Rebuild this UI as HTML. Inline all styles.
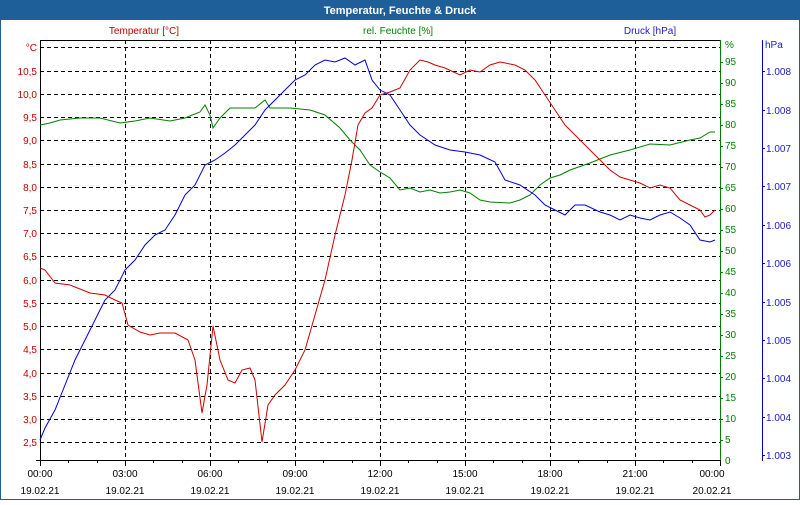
<!DOCTYPE html>
<html><head><meta charset="utf-8"><style>
html,body{margin:0;padding:0;background:#fff}
body{width:800px;height:500px;overflow:hidden;font-family:"Liberation Sans",sans-serif}
</style></head><body>
<svg width="800" height="500" xmlns="http://www.w3.org/2000/svg" font-family="Liberation Sans, sans-serif" font-size="10">
<rect x="0" y="0" width="800" height="500" fill="#fff"/>
<rect x="0.5" y="0.5" width="799" height="499" fill="none" stroke="#1f5f99"/>
<rect x="0" y="0" width="800" height="20" fill="#1f5f99"/>
<text x="400" y="14" fill="#fff" font-weight="bold" font-size="11" text-anchor="middle">Temperatur, Feuchte &amp; Druck</text>
<text x="144" y="34" fill="#c00000" text-anchor="middle">Temperatur [°C]</text>
<text x="398" y="34" fill="#008000" text-anchor="middle">rel. Feuchte [%]</text>
<text x="650" y="34" fill="#2020c0" text-anchor="middle">Druck [hPa]</text>
<g stroke="#000" stroke-dasharray="4,3" stroke-width="1">
<line x1="40" y1="47.5" x2="720" y2="47.5"/><line x1="40" y1="71.5" x2="720" y2="71.5"/><line x1="40" y1="94.5" x2="720" y2="94.5"/><line x1="40" y1="117.5" x2="720" y2="117.5"/><line x1="40" y1="140.5" x2="720" y2="140.5"/><line x1="40" y1="164.5" x2="720" y2="164.5"/><line x1="40" y1="187.5" x2="720" y2="187.5"/><line x1="40" y1="210.5" x2="720" y2="210.5"/><line x1="40" y1="233.5" x2="720" y2="233.5"/><line x1="40" y1="256.5" x2="720" y2="256.5"/><line x1="40" y1="280.5" x2="720" y2="280.5"/><line x1="40" y1="303.5" x2="720" y2="303.5"/><line x1="40" y1="326.5" x2="720" y2="326.5"/><line x1="40" y1="349.5" x2="720" y2="349.5"/><line x1="40" y1="373.5" x2="720" y2="373.5"/><line x1="40" y1="396.5" x2="720" y2="396.5"/><line x1="40" y1="419.5" x2="720" y2="419.5"/><line x1="40" y1="442.5" x2="720" y2="442.5"/>
<line x1="125.5" y1="40" x2="125.5" y2="460"/><line x1="210.5" y1="40" x2="210.5" y2="460"/><line x1="295.5" y1="40" x2="295.5" y2="460"/><line x1="380.5" y1="40" x2="380.5" y2="460"/><line x1="465.5" y1="40" x2="465.5" y2="460"/><line x1="550.5" y1="40" x2="550.5" y2="460"/><line x1="635.5" y1="40" x2="635.5" y2="460"/>
</g>
<line x1="40.5" y1="40" x2="40.5" y2="466" stroke="#000"/>
<line x1="40" y1="40.5" x2="720" y2="40.5" stroke="#000"/>
<line x1="36" y1="460.5" x2="720" y2="460.5" stroke="#000"/>
<line x1="720.5" y1="40" x2="720.5" y2="461" stroke="#008000"/>
<line x1="762.5" y1="40" x2="762.5" y2="461" stroke="#0000c0"/>
<g stroke="#000">
<line x1="40.5" y1="460" x2="40.5" y2="466"/><line x1="68.5" y1="460" x2="68.5" y2="463"/><line x1="97.5" y1="460" x2="97.5" y2="463"/><line x1="125.5" y1="460" x2="125.5" y2="466"/><line x1="153.5" y1="460" x2="153.5" y2="463"/><line x1="182.5" y1="460" x2="182.5" y2="463"/><line x1="210.5" y1="460" x2="210.5" y2="466"/><line x1="238.5" y1="460" x2="238.5" y2="463"/><line x1="267.5" y1="460" x2="267.5" y2="463"/><line x1="295.5" y1="460" x2="295.5" y2="466"/><line x1="323.5" y1="460" x2="323.5" y2="463"/><line x1="352.5" y1="460" x2="352.5" y2="463"/><line x1="380.5" y1="460" x2="380.5" y2="466"/><line x1="408.5" y1="460" x2="408.5" y2="463"/><line x1="437.5" y1="460" x2="437.5" y2="463"/><line x1="465.5" y1="460" x2="465.5" y2="466"/><line x1="493.5" y1="460" x2="493.5" y2="463"/><line x1="522.5" y1="460" x2="522.5" y2="463"/><line x1="550.5" y1="460" x2="550.5" y2="466"/><line x1="578.5" y1="460" x2="578.5" y2="463"/><line x1="607.5" y1="460" x2="607.5" y2="463"/><line x1="635.5" y1="460" x2="635.5" y2="466"/><line x1="663.5" y1="460" x2="663.5" y2="463"/><line x1="692.5" y1="460" x2="692.5" y2="463"/><line x1="720.5" y1="460" x2="720.5" y2="466"/>
</g>
<g fill="#000" text-anchor="middle">
<text x="40" y="477">00:00</text><text x="125" y="477">03:00</text><text x="210" y="477">06:00</text><text x="295" y="477">09:00</text><text x="380" y="477">12:00</text><text x="465" y="477">15:00</text><text x="550" y="477">18:00</text><text x="635" y="477">21:00</text><text x="712" y="477">00:00</text>
<text x="40" y="494">19.02.21</text><text x="125" y="494">19.02.21</text><text x="210" y="494">19.02.21</text><text x="295" y="494">19.02.21</text><text x="380" y="494">19.02.21</text><text x="465" y="494">19.02.21</text><text x="550" y="494">19.02.21</text><text x="635" y="494">19.02.21</text><text x="712" y="494">20.02.21</text>
</g>
<g fill="#c00000" text-anchor="end">
<text x="37" y="51">°C</text><text x="37" y="75">10,5</text><text x="37" y="98">10,0</text><text x="37" y="121">9,5</text><text x="37" y="144">9,0</text><text x="37" y="168">8,5</text><text x="37" y="191">8,0</text><text x="37" y="214">7,5</text><text x="37" y="237">7,0</text><text x="37" y="260">6,5</text><text x="37" y="284">6,0</text><text x="37" y="307">5,5</text><text x="37" y="330">5,0</text><text x="37" y="353">4,5</text><text x="37" y="377">4,0</text><text x="37" y="400">3,5</text><text x="37" y="423">3,0</text><text x="37" y="446">2,5</text>
</g>
<g fill="#008000">
<text x="725" y="48">%</text><text x="725" y="65">95</text><text x="725" y="86">90</text><text x="725" y="107">85</text><text x="725" y="128">80</text><text x="725" y="149">75</text><text x="725" y="170">70</text><text x="725" y="191">65</text><text x="725" y="212">60</text><text x="725" y="233">55</text><text x="725" y="254">50</text><text x="725" y="275">45</text><text x="725" y="296">40</text><text x="725" y="317">35</text><text x="725" y="338">30</text><text x="725" y="359">25</text><text x="725" y="380">20</text><text x="725" y="401">15</text><text x="725" y="422">10</text><text x="725" y="443">5</text><text x="725" y="464">0</text>
</g>
<g stroke="#008000">
<line x1="720" y1="62.5" x2="723" y2="62.5"/><line x1="720" y1="83.5" x2="723" y2="83.5"/><line x1="720" y1="104.5" x2="723" y2="104.5"/><line x1="720" y1="125.5" x2="723" y2="125.5"/><line x1="720" y1="146.5" x2="723" y2="146.5"/><line x1="720" y1="167.5" x2="723" y2="167.5"/><line x1="720" y1="188.5" x2="723" y2="188.5"/><line x1="720" y1="209.5" x2="723" y2="209.5"/><line x1="720" y1="230.5" x2="723" y2="230.5"/><line x1="720" y1="251.5" x2="723" y2="251.5"/><line x1="720" y1="272.5" x2="723" y2="272.5"/><line x1="720" y1="293.5" x2="723" y2="293.5"/><line x1="720" y1="314.5" x2="723" y2="314.5"/><line x1="720" y1="335.5" x2="723" y2="335.5"/><line x1="720" y1="356.5" x2="723" y2="356.5"/><line x1="720" y1="377.5" x2="723" y2="377.5"/><line x1="720" y1="398.5" x2="723" y2="398.5"/><line x1="720" y1="419.5" x2="723" y2="419.5"/><line x1="720" y1="440.5" x2="723" y2="440.5"/>
</g>
<g fill="#2020c0">
<text x="765" y="48">hPa</text><text x="766" y="75">1.008</text><text x="766" y="114">1.008</text><text x="766" y="152">1.007</text><text x="766" y="190">1.007</text><text x="766" y="229">1.006</text><text x="766" y="267">1.006</text><text x="766" y="306">1.005</text><text x="766" y="344">1.005</text><text x="766" y="382">1.004</text><text x="766" y="421">1.004</text><text x="766" y="459">1.003</text>
</g>
<g stroke="#0000c0"><line x1="762" y1="71.5" x2="765" y2="71.5"/><line x1="762" y1="110.5" x2="765" y2="110.5"/><line x1="762" y1="148.5" x2="765" y2="148.5"/><line x1="762" y1="186.5" x2="765" y2="186.5"/><line x1="762" y1="225.5" x2="765" y2="225.5"/><line x1="762" y1="263.5" x2="765" y2="263.5"/><line x1="762" y1="302.5" x2="765" y2="302.5"/><line x1="762" y1="340.5" x2="765" y2="340.5"/><line x1="762" y1="378.5" x2="765" y2="378.5"/><line x1="762" y1="417.5" x2="765" y2="417.5"/><line x1="762" y1="455.5" x2="765" y2="455.5"/></g>
<polyline fill="none" stroke="#008000" points="40,125 50,123 60,120 80,118 100,118 120,123 135,121 150,118 170,121 185,118 200,112 205,105 210,115 213,128 220,118 230,108 240,108 255,108 265,100 270,108 290,108 310,110 325,115 340,128 350,140 360,150 370,165 380,172 390,178 400,190 410,188 420,192 430,190 440,193 450,192 460,190 470,193 480,200 490,202 510,203 520,200 530,195 540,185 550,178 560,175 570,170 590,163 610,155 630,150 650,144 670,145 690,140 700,138 710,132 715,132"/>
<polyline fill="none" stroke="#0000e0" points="40,440 45,428 55,410 65,385 75,360 85,340 95,320 105,300 115,290 125,270 135,260 145,245 155,235 165,230 175,215 185,195 195,185 205,165 215,160 225,153 235,145 245,135 255,125 265,110 275,100 285,90 295,80 305,75 315,65 325,60 335,62 345,58 355,65 365,60 372,80 380,90 390,95 400,110 410,125 420,135 435,145 450,150 465,152 480,155 495,162 505,180 520,185 535,195 545,205 555,210 565,215 575,205 585,205 600,212 610,215 620,220 630,215 640,218 650,220 660,215 670,212 680,218 690,225 700,240 710,242 715,240"/>
<polyline fill="none" stroke="#d00000" points="40,268 45,270 55,283 70,285 90,293 105,295 115,300 122,303 128,325 140,332 150,335 160,333 175,333 188,340 195,360 202,413 207,385 213,326 220,360 228,380 235,383 242,370 250,368 255,380 262,442 268,405 275,395 285,385 295,370 305,350 315,315 325,280 335,235 345,195 352,160 358,125 365,113 372,108 380,95 390,92 400,88 410,70 420,60 428,62 435,65 445,68 460,75 470,70 480,72 490,65 500,62 515,65 525,70 535,80 545,95 555,110 565,125 575,135 590,150 600,160 610,170 620,177 630,180 640,183 650,188 660,185 670,188 680,200 690,205 700,210 705,217 710,215 715,210"/>
</svg>
</body></html>
